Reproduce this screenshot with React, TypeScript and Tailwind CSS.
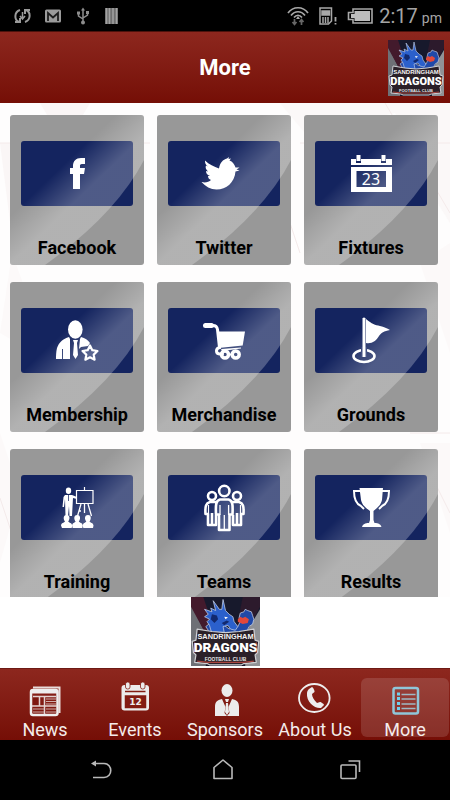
import type { ReactNode } from "react";

/* ---------- club badge ---------- */

function ClubLogo({ className }: { className: string }) {
  return (
    <svg viewBox="0 0 56 56" className={className} role="img" aria-label="Sandringham Dragons Football Club">
      <rect width="56" height="56" fill="#17192c" />
      <path d="M0 6l12 24v26H0z" fill="#6e7076" />
      <path d="M0 0h10l10 30h-8L0 8z" fill="#431a2c" />
      <path d="M56 0H42l-6 30h8L56 8z" fill="#2c1a2c" />
      <path d="M56 10L44 30v26h12z" fill="#909296" />
      {/* dragon body and arm */}
      <path
        d="M12 31l2-4-2-3 5-4 6 0 8 6 4-3 3 1 2-4-1-3 1-4 3-1 1-2 2 1 3 1 1 3 1 3-1 4-3 2-2 5-4 4z"
        fill="#2049a8"
        stroke="#c9d4e8"
        strokeWidth="0.600"
        strokeLinejoin="round"
      />
      {/* head, horns and spikes */}
      <path
        d="M15 23l-2-3 2-2-4-2 3-2-3-4 6 2-1-3 4 2-2-8 5 7 2 0 1-8 2 9 3 3 3 2 1 4 3 4-2 3-4-1-2-3-4 1 1 5-4 3-6-2z"
        fill="#2b60cc"
        stroke="#c9d4e8"
        strokeWidth="0.600"
        strokeLinejoin="round"
      />
      <path d="M17 14l4 1 1 3-3 3-3-3zM25 21l4-2 2 1-4 3z" fill="#12296e" />
      <path d="M27 16l3 .5-2 1.500z" fill="#fff" />
      <path d="M38 18l2-2 2 1 2-1 3 2-1 3-4 1-4-2z" fill="#e2483b" />
      {/* lettering plate */}
      <path
        d="M5 26l12 2 11 1 11-1 12-2 1 9 3 1-1 9-2 2 1 6-10 1-2 1H15l-2-1-10-1 1-6-2-2-1-9 3-1z"
        fill="#2a2028"
        stroke="#cfd0d4"
        strokeWidth="1"
        strokeLinejoin="round"
      />
      <path d="M3 37v8M53 37v8M5 52l9 1h28l9-1" stroke="#a8443f" strokeWidth="1" fill="none" />
      <text x="28" y="34" textAnchor="middle" fontSize="6" fontWeight="900" fill="#f4f4f4" className="font-['Liberation_Sans',sans-serif]">
        SANDRINGHAM
      </text>
      <text x="28" y="45" textAnchor="middle" fontSize="11" fontWeight="900" fill="#fff" className="font-[Roboto,sans-serif]">
        DRAGONS
      </text>
      <text x="28" y="52" textAnchor="middle" fontSize="4" fontWeight="700" fill="#e8e8e8" className="font-['Liberation_Sans',sans-serif]">
        FOOTBALL CLUB
      </text>
    </svg>
  );
}

/* ---------- tile artwork, drawn on a 112x65 panel ---------- */

const facebookArt = (
  <path d="M52 48V33h-3v-6h3v-2c0-5 3-8 8-8h4v6h-3c-2 0-2 1-2 2v2h5l-1 6h-4v15z" fill="#fff" />
);

const twitterArt = (
  <path
    d="M34 41c3 1 7 0 9-2-2-1-3-2-3-4h2c-3-1-4-3-4-5l2 .5c-2-2-3-4-2-6l2 1c-3-2-3-4-3-6 4 4 9 6 14 8 1-6 4-9 8-10l2-1.500-.5 2 2.500-.5-1.500 2c3 1 5 4 6 7l4 0-3 2 3 1-4 1c-1 11-9 18-19 18-6 0-11-3-15-7.500z"
    fill="#fff"
  />
);

const fixturesArt = (
  <>
    <path d="M36 18h5v4h5v-4h20v4h5v-4h6v6H36zM36 26h41v25H36zM41.500 30v16h29.500V30z" fill="#fff" fillRule="evenodd" />
    <path d="M41.500 14h4v6h-4zM66.500 14h4v6h-4z" fill="#fff" />
    <text x="56" y="43.500" textAnchor="middle" fontSize="16" fill="#fff" className="font-['Noto_Sans',sans-serif]">
      23
    </text>
  </>
);

const membershipArt = (
  <>
    <ellipse cx="54.300" cy="21.500" rx="7.300" ry="9.300" fill="#fff" />
    <path d="M48 29c-6 2-10 5-12 11-1 4-1 8-1 11h14V31zM60 29c4 1 7 3 9 6l-2 3-7 1-2 2 1-10z" fill="#fff" />
    <path d="M52 32h5l-1 3 1 12-2.500 4-2.500-4 1-12z" fill="#fff" />
    <path d="M41.500 51V41" stroke="#24346d" strokeWidth="1" />
    <path
      d="M69 37.500l2.300 4.700 5.200.8-3.800 3.600.9 5.100-4.600-2.400-4.600 2.400.9-5.100-3.800-3.600 5.200-.8z"
      fill="#24346d"
      stroke="#fff"
      strokeWidth="2.200"
      strokeLinejoin="round"
    />
  </>
);

const merchandiseArt = (
  <>
    <path d="M38 17.500h7c3 0 4 1 4.500 4l2 18c-4 1-4 6 0 6.500h3" fill="none" stroke="#fff" strokeWidth="3" strokeLinecap="round" />
    <path d="M37.500 17.500h6" stroke="#fff" strokeWidth="5" strokeLinecap="round" />
    <path d="M49 23.500h28l-2.300 14L51 40z" fill="#fff" />
    <path d="M53 41l20-1.500v1L54 43z" fill="#fff" />
    <circle cx="57" cy="46.500" r="3.500" fill="none" stroke="#fff" strokeWidth="3.500" />
    <circle cx="67.700" cy="46.500" r="3.500" fill="none" stroke="#fff" strokeWidth="3.500" />
    <path d="M60 46.500h4" stroke="#fff" strokeWidth="2" />
  </>
);

const groundsArt = (
  <>
    <ellipse cx="49" cy="48" rx="10.500" ry="6" fill="none" stroke="#fff" strokeWidth="2.600" />
    <path d="M46 39h6v10h-6z" fill="#22326c" />
    <path d="M47.500 10.500q1.500-2 3 0V49h-3z" fill="#fff" />
    <path d="M51 11c6 5 9 6 14 7 4 1 7 2 10 4-6 1-9 3-11 6-3 5-7 8-13 7z" fill="#fff" />
  </>
);

const trainingArt = (
  <>
    <ellipse cx="47.500" cy="15.800" rx="2.700" ry="3.300" fill="#fff" />
    <path d="M44 20h7l5 2v2l-4-1-1 18h-2.500L48 31l-1 10h-2.500L44 24l-1 8h-1.500l1-10z" fill="#fff" />
    <path d="M47.500 20v6" stroke="#22326c" strokeWidth=".8" />
    <path d="M55.500 15.500h16.500v13H55.500zM63.500 12v3" fill="none" stroke="#fff" strokeWidth="1.200" />
    <path d="M60 29l-3.500 12M67 29l3.500 12M63.500 29v9M58 36h2" stroke="#fff" strokeWidth="1.300" />
    <g fill="#fff">
      <path d="M45.700 40c4 0 3 5 1.500 6.500 1 1.500 3.500 1 4 4l-.5 2.500H41l-1-2.500c.5-3 3-2.500 4-4-1.500-1.500-2.500-6.500 1.700-6.500z" />
      <path d="M56.300 40c4 0 3 5 1.500 6.500 1 1.500 3.500 1 4 4l-.5 2.500h-9.700l-.5-2.500c.5-3 2.500-2.500 3.500-4-1.500-1.500-2.500-6.500 1.700-6.500z" />
      <path d="M67 40c4 0 3 5 1.500 6.500 1 1.500 3.500 1 4 4L72 53h-9.700l-.5-2.500c.5-3 2.500-2.500 3.500-4-1.500-1.500-2.500-6.500 1.700-6.500z" />
    </g>
  </>
);

const teamsArt = (
  <g fill="none" stroke="#fff" strokeWidth="2.600" strokeLinejoin="round">
    <circle cx="44" cy="21" r="4" />
    <circle cx="69" cy="21" r="4" />
    <path d="M50 27h-8c-4 1-5 4-4.500 12h2.500V50h8V40M44 38v12M63 27h8c4 1 5 4 4.500 12H73V50h-8V40M69 38v12" />
    <path d="M40.500 30v9M72.500 30v9" strokeWidth="1.200" />
    <path d="M52 24.500h8.600c4 1 4.400 5 3.900 15h-3V55H51V39.500h-3c-.5-10 0-14 4-15z" fill="#2a3a72" />
    <path d="M56.300 40v14M52 30v10M60.600 30v10" strokeWidth="1.300" />
    <circle cx="56.300" cy="16" r="5.200" fill="#2a3a72" />
  </g>
);

const resultsArt = (
  <>
    <path d="M46 16h-7c0 8 2 13 7 15l3 3M67 16h7c0 8-2 13-7 15l-3 3" fill="none" stroke="#fff" strokeWidth="2" />
    <path d="M44.500 13h23.500l-1 12c-1 5-5 8-8.500 11v9l1 3c4 0 6 1 7 4H47c1-3 3-4 7-4l1-3v-9c-4-3-8-6-9-11z" fill="#fff" />
  </>
);

const tiles: { label: string; art: ReactNode }[] = [
  { label: "Facebook", art: facebookArt },
  { label: "Twitter", art: twitterArt },
  { label: "Fixtures", art: fixturesArt },
  { label: "Membership", art: membershipArt },
  { label: "Merchandise", art: merchandiseArt },
  { label: "Grounds", art: groundsArt },
  { label: "Training", art: trainingArt },
  { label: "Teams", art: teamsArt },
  { label: "Results", art: resultsArt },
];

function Tile({ label, art }: { label: string; art: ReactNode }) {
  return (
    <button className="relative flex h-[150px] flex-col items-center overflow-hidden rounded-[3px] bg-[#989898] pt-[26px]">
      <svg viewBox="0 0 112 65" className="h-[65px] w-28 shrink-0 rounded-[3px] bg-[#14245f]" aria-hidden="true">
        {art}
      </svg>
      {/* diagonal shine */}
      <svg viewBox="0 0 134 150" preserveAspectRatio="none" className="absolute inset-0 h-full w-full" aria-hidden="true">
        <defs>
          <linearGradient id="shine" gradientUnits="userSpaceOnUse" x1="50" y1="53" x2="74" y2="78">
            <stop offset="0" stopColor="#fff" stopOpacity="0" />
            <stop offset="1" stopColor="#fff" stopOpacity="0.25" />
          </linearGradient>
        </defs>
        <path d="M0 0H134V45Q106 99 35 150H0z" fill="url(#shine)" />
      </svg>
      <span className="relative mt-[30px] text-lg leading-6 font-bold text-black">{label}</span>
    </button>
  );
}

/* ---------- bottom tabs, drawn on 36x43 ---------- */

const newsIcon = (
  <>
    <path d="M6 9.500h26.500V35" fill="none" stroke="#e9dcda" strokeWidth="2" />
    <rect x="4" y="12" width="26.500" height="25" rx="2" fill="none" stroke="#eee" strokeWidth="2.500" />
    <path d="M4 14h26" stroke="#eee" strokeWidth="3" />
    <path d="M6 19h6v8H6z" fill="#7d1810" />
    <path d="M12.500 18v10M17.500 18v18M5 28h25M6 18.500h23" stroke="#e3d3d1" strokeWidth="1.500" />
    <path d="M19 21h10M19 23.500h10M19 26h10M19 31h10M6 31h11M19 34h10M6 34h11" stroke="#cfaeab" strokeWidth="1" />
  </>
);

const eventsIcon = (
  <>
    <rect x="4.500" y="7" width="27.500" height="25.500" rx="3" fill="#ececec" />
    <path d="M8 13.500h20.500M8.500 18h20v11.500h-20z" fill="#831c13" stroke="#831c13" strokeWidth="1.500" />
    <rect x="8.500" y="4" width="4.500" height="7" rx="2" fill="#ececec" stroke="#831c13" strokeWidth=".8" />
    <rect x="23.500" y="4" width="4.500" height="7" rx="2" fill="#ececec" stroke="#831c13" strokeWidth=".8" />
    <text x="18.500" y="27" textAnchor="middle" fontSize="9" fontWeight="700" fill="#eee" className="font-['DejaVu_Sans',sans-serif]">
      12
    </text>
  </>
);

const sponsorsIcon = (
  <g fill="#ececec">
    <ellipse cx="20" cy="12.500" rx="5.500" ry="6.500" />
    <path d="M8 38v-9c0-5 2-7 7-8l3.500 8-1 6 2.500 3 2.500-3-1-6 3.500-8c5 1 7 3 7 8v9z" />
    <path d="M18 21h4l-1 3h-2zM19 25h2l1 9-2 3-2-3z" />
  </g>
);

const aboutIcon = (
  <>
    <ellipse cx="17.300" cy="20" rx="15.300" ry="14" fill="none" stroke="#eee" strokeWidth="1.800" />
    <path
      d="M12 11l3-2c1 0 3 4 2.500 5L15 16c0 3 2 6 5 9l3-1c1 0 4 2 4 3l-3 3c-6 1-15-6-14-15 .2-2 1-3 2-4z"
      fill="#eee"
    />
  </>
);

const moreIcon = (
  <>
    <rect x="6.500" y="10" width="24.500" height="25.500" rx="2" fill="none" stroke="#8fc6d9" strokeWidth="2.500" />
    <path d="M10 16h3M10 20.500h3M10 25.500h3M10 30.500h3" stroke="#6fd0ee" strokeWidth="3" />
    <path d="M14.500 16.500h14M14.500 21h14M14.500 26h14M14.500 30.500h14" stroke="#9fb9c4" strokeWidth="1.500" />
  </>
);

const tabs: { label: string; icon: ReactNode; active?: boolean }[] = [
  { label: "News", icon: newsIcon },
  { label: "Events", icon: eventsIcon },
  { label: "Sponsors", icon: sponsorsIcon },
  { label: "About Us", icon: aboutIcon },
  { label: "More", icon: moreIcon, active: true },
];

/* ---------- screen sections ---------- */

function StatusBar() {
  return (
    <div className="flex h-[31px] shrink-0 items-center justify-between bg-black pr-2 pl-3.5 text-[#a5a5a5]">
      <div className="flex items-center gap-3.5">
        <svg viewBox="0 0 17 16" className="h-4 w-[17px]" fill="none" stroke="#9b9b9b" strokeWidth="2" aria-hidden="true">
          <path d="M6 2C0 4 0 12 5 14M11 14c6-2 6-10 1-12M1 14h5v-4M16 2h-5v4" />
          <path d="M8.500 4v6M6 8l2.500 3L11 8" strokeWidth="1.500" />
        </svg>
        <svg viewBox="0 0 16 14" className="h-3.5 w-4" aria-hidden="true">
          <rect width="16" height="13" y=".5" rx="1.500" fill="#9b9b9b" />
          <path d="M3 12V4l5 4.500L13 4v8" fill="none" stroke="#1c1c1c" strokeWidth="1.800" />
        </svg>
        <svg viewBox="0 0 12 18" className="ml-0.5 h-[18px] w-3" fill="none" stroke="#8d8d8d" strokeWidth="1.500" aria-hidden="true">
          <path d="M6 2v13M1.500 6v3L6 12M10.500 5v3L6 11" />
          <path d="M4 3.500L6 .5l2 3z" fill="#8d8d8d" stroke="none" />
          <circle cx="6" cy="15.500" r="2" fill="#8d8d8d" stroke="none" />
          <path d="M0 4.500h3v3H0zM9 4h3v3H9z" fill="#8d8d8d" stroke="none" />
        </svg>
        <svg viewBox="0 0 13 16" className="ml-0.5 h-4 w-[13px]" aria-hidden="true">
          <rect width="13" height="16" fill="#6f6f6f" />
          <path d="M1.500 0v16M4.500 0v16M8 0v16M11.500 0v16" stroke="#a2a2a2" strokeWidth="1.500" />
        </svg>
      </div>
      <div className="flex items-center">
        <svg viewBox="0 0 22 20" className="mr-2.5 h-5 w-[22px]" fill="none" stroke="#a8a8a8" strokeWidth="1.700" aria-hidden="true">
          <path d="M1 7c5-7 15-7 20 0M4 9.500c4-5 10-5 14 0M7 11.500c2.500-3 5.500-3 8 0" />
          <path d="M11 10l2 3H9z" fill="#a8a8a8" stroke="none" />
          <path d="M7.500 13v5M5.500 16l2 2.500 2-2.500M14.500 19v-5M12.500 16l2-2.500 2 2.500" stroke="#666" />
        </svg>
        <svg viewBox="0 0 18 18" className="mr-2.5 h-[18px] w-[18px]" fill="none" stroke="#a8a8a8" strokeWidth="1.500" aria-hidden="true">
          <path d="M1 1h11.500v13l-3 3H1z" />
          <path d="M3 4h7.500v4H3z" fill="#a8a8a8" />
          <path d="M4 10v6M6.500 10v6M9 10v6" />
          <path d="M16.500 10v4.500M16.500 16v1.500" strokeWidth="1.800" />
        </svg>
        <svg viewBox="0 0 26 16" className="mr-1.5 h-4 w-[26px]" aria-hidden="true">
          <path d="M6 1h19v14H6v-3.500H1.500v-7H6z" fill="none" stroke="#a8a8a8" strokeWidth="1.600" />
          <path d="M7.500 3H23v10H7.500v-3H4V6h3.500z" fill="#bdbdbd" />
        </svg>
        <p className="flex items-baseline gap-1">
          <span className="text-xl leading-8">2:17</span>
          <span className="text-sm">pm</span>
        </p>
      </div>
    </div>
  );
}

function Header() {
  return (
    <header className="grid h-[72px] shrink-0 grid-cols-[1fr_auto_1fr] items-center border-t border-[#4d120c] bg-linear-to-b from-[#8d271e] to-[#750e06] px-1.5">
      <h1 className="col-start-2 text-[22px] font-bold text-white">More</h1>
      <ClubLogo className="h-14 w-14 justify-self-end" />
    </header>
  );
}

function MoreGrid() {
  return (
    <main className="relative min-h-0 flex-1 overflow-hidden bg-[#fefdfd]">
      {/* faint facets behind the tiles */}
      <svg viewBox="0 0 450 494" preserveAspectRatio="none" className="absolute inset-0 h-full w-full" aria-hidden="true">
        <path d="M0 0h90L65 42 40 0M0 40h60L12 135z" fill="#faf6f6" />
        <path d="M280 0h170v120l-25-40-30-70-90 20z" fill="#fbf8f8" />
        <path d="M0 230l12-80 40 110zM450 250l-30-90 30-20zM420 340h30v90zM0 330l20 60L0 460z" fill="#fcf9f9" />
        <path d="M0 40h150M385 0l65 110M300 40h150M0 395l20 60M410 330h40M425 360l25 50M300 150l-20-60" stroke="#f4eaea" strokeWidth="1" />
      </svg>
      <div className="relative grid grid-cols-3 gap-x-[13px] gap-y-[17px] pt-3 pr-3 pl-2.5">
        {tiles.map((tile) => (
          <Tile key={tile.label} {...tile} />
        ))}
      </div>
    </main>
  );
}

function TabBar() {
  return (
    <nav className="grid h-[72px] shrink-0 grid-cols-5 border-t border-[#6d1a15] bg-linear-to-b from-[#8d271e] to-[#750e06] pt-[9px]">
      {tabs.map((tab) => (
        <button
          key={tab.label}
          aria-current={tab.active ? "page" : undefined}
          className={`mx-px flex h-[59px] flex-col items-center rounded-md ${tab.active ? "bg-white/13" : ""}`}
        >
          <svg viewBox="0 0 36 43" className="h-[43px] w-9 shrink-0" aria-hidden="true">
            {tab.icon}
          </svg>
          <span className="text-lg leading-[18px] whitespace-nowrap text-[#f4eceb]">{tab.label}</span>
        </button>
      ))}
    </nav>
  );
}

function SystemNav() {
  return (
    <div className="grid h-[60px] shrink-0 grid-cols-3 place-items-center bg-black px-9">
      <button aria-label="Back">
        <svg viewBox="0 0 28 24" className="h-6 w-7" fill="none" stroke="#b9b9b9" strokeWidth="1.600" aria-hidden="true">
          <path d="M8 5.500h11c9 0 9 14 0 14H8" />
          <path d="M6 5.500L11 2.500v6z" fill="#b9b9b9" stroke="none" />
        </svg>
      </button>
      <button aria-label="Home">
        <svg viewBox="0 0 28 24" className="h-6 w-7" fill="none" stroke="#b9b9b9" strokeWidth="1.600" aria-hidden="true">
          <path d="M3 20.500v-11l9-7.500 9 7.500v11z" strokeLinejoin="round" />
        </svg>
      </button>
      <button aria-label="Recent apps">
        <svg viewBox="0 0 28 24" className="h-6 w-7" fill="none" stroke="#b9b9b9" strokeWidth="1.600" aria-hidden="true">
          <rect x="4" y="7" width="15" height="13.500" rx="1" />
          <path d="M11.500 3h11v11" />
        </svg>
      </button>
    </div>
  );
}

export default function App() {
  return (
    <div className="flex h-screen flex-col bg-white font-[Roboto,sans-serif]">
      <StatusBar />
      <Header />
      <MoreGrid />
      <div className="flex h-[71px] shrink-0 justify-center bg-white">
        <ClubLogo className="h-[69px] w-[69px]" />
      </div>
      <TabBar />
      <SystemNav />
    </div>
  );
}
